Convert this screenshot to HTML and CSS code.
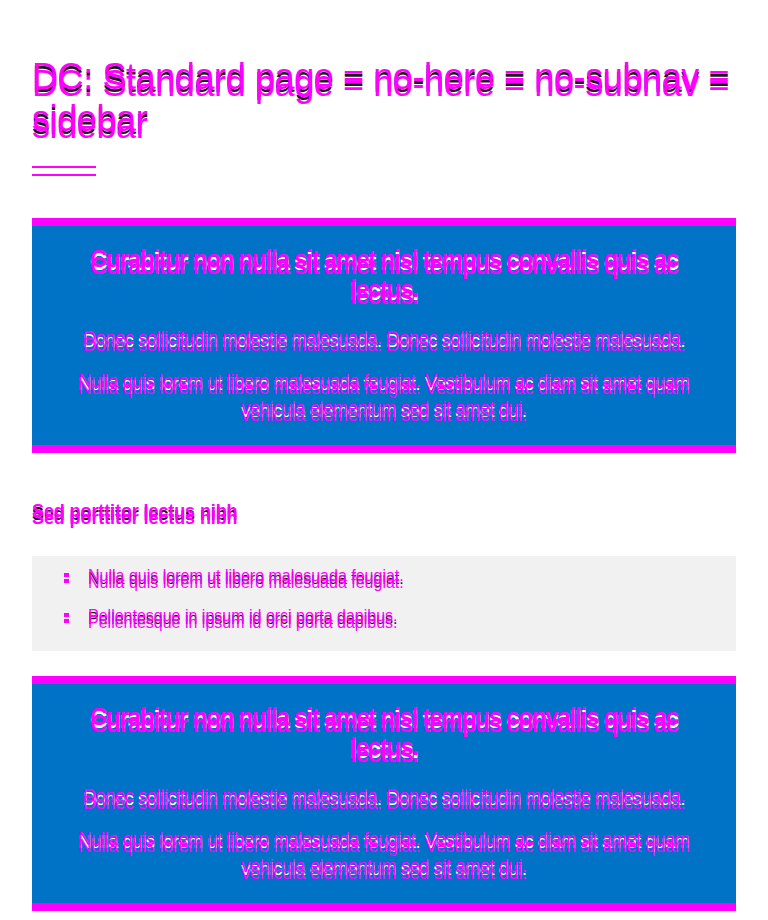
FILE: index.html
```html
<!DOCTYPE html>
<html lang="en">
<head>
<meta charset="utf-8">
<title>DC: Standard page</title>
<link rel="stylesheet" href="styles.css">
</head>
<body>
<main class="page">
  <h1 class="title ghost">DC: Standard page = no-here = no-subnav = sidebar</h1>
  <div class="rule"></div>

  <section class="callout">
    <h2 class="callout-title ghost-light">Curabitur non nulla sit amet nisl tempus convallis quis ac lectus.</h2>
    <p class="callout-text ghost-light">Donec sollicitudin molestie malesuada. Donec sollicitudin molestie malesuada.</p>
    <p class="callout-text ghost-light">Nulla quis lorem ut libero malesuada feugiat. Vestibulum ac diam sit amet quam vehicula elementum sed sit amet dui.</p>
  </section>

  <h2 class="subhead ghost">Sed porttitor lectus nibh</h2>

  <ul class="list">
    <li class="list-item ghost">Nulla quis lorem ut libero malesuada feugiat.</li>
    <li class="list-item ghost">Pellentesque in ipsum id orci porta dapibus.</li>
  </ul>

  <section class="callout">
    <h2 class="callout-title ghost-light">Curabitur non nulla sit amet nisl tempus convallis quis ac lectus.</h2>
    <p class="callout-text ghost-light">Donec sollicitudin molestie malesuada. Donec sollicitudin molestie malesuada.</p>
    <p class="callout-text ghost-light">Nulla quis lorem ut libero malesuada feugiat. Vestibulum ac diam sit amet quam vehicula elementum sed sit amet dui.</p>
  </section>
</main>
</body>
</html>
```

FILE: styles.css
```css
html, body {
  margin: 0;
  padding: 0;
  background: #ffffff;
}

body {
  font-family: "Liberation Sans", Arial, sans-serif;
}

.page {
  padding: 56px 32px 0;
  display: flex;
  flex-direction: column;
}

.ghost {
  color: #ff00ff;
  text-shadow: 0 7px 0 #ff00ff, 0 3px 0 #1a1a1a;
}

.ghost-light {
  color: #ff00ff;
  text-shadow: 0 7px 0 #ff00ff, 0 3px 0 #ffffff;
}

.title {
  margin: 0;
  font-size: 36px;
  line-height: 42px;
  font-weight: 400;
  letter-spacing: -0.4px;
}

.rule {
  width: 64px;
  height: 6px;
  border-top: 2px solid #ff00ff;
  border-bottom: 2px solid #ff00ff;
  margin-top: 26px;
}

.callout {
  margin-top: 42px;
  background: #0073c6;
  border-top: 8px solid #ff00ff;
  border-bottom: 8px solid #ff00ff;
  padding: 18px 40px 23px;
  text-align: center;
}

.callout-title {
  margin: 0;
  font-size: 24px;
  line-height: 30px;
  font-weight: 700;
  letter-spacing: -1.2px;
}

.callout-text {
  margin: 16px 0 0;
  font-size: 18px;
  line-height: 27px;
  letter-spacing: -0.3px;
}

.callout-title + .callout-text {
  margin-top: 21px;
}

.subhead {
  margin: 46px 0 0;
  font-size: 18px;
  line-height: 24px;
  font-weight: 700;
  letter-spacing: -0.1px;
}

.list {
  margin: 33px 0 0;
  padding: 9px 32px 24px 56px;
  background: #f1f1f1;
  list-style: none;
  display: flex;
  flex-direction: column;
  gap: 18px;
}

.list-item {
  position: relative;
  font-size: 16px;
  line-height: 22px;
  letter-spacing: 0;
}

.list-item::before {
  content: "";
  position: absolute;
  left: -24px;
  top: 8px;
  width: 5px;
  height: 4px;
  background: #ff00ff;
  box-shadow: 0 6px 0 #ff00ff;
}

.list + .callout {
  margin-top: 25px;
}
```
